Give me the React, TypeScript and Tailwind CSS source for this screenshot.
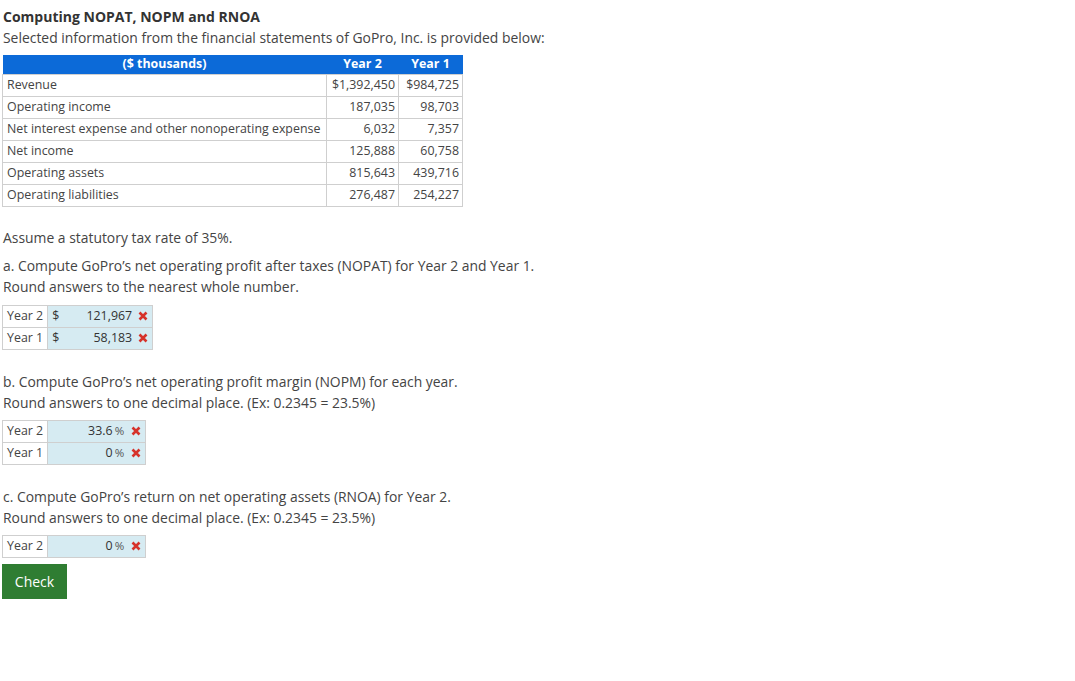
import React from "react";

const X = () => (
  <svg width="10" height="10" viewBox="0 0 10 10" className="inline-block">
    <path d="M1.5 1.5 L8.5 8.5 M8.5 1.5 L1.5 8.5" stroke="#d6322a" strokeWidth="2.6" strokeLinecap="butt" />
  </svg>
);

const rows = [
  ["Revenue", "$1,392,450", "$984,725"],
  ["Operating income", "187,035", "98,703"],
  ["Net interest expense and other nonoperating expense", "6,032", "7,357"],
  ["Net income", "125,888", "60,758"],
  ["Operating assets", "815,643", "439,716"],
  ["Operating liabilities", "276,487", "254,227"],
];

function DollarRow({ label, value }: { label: string; value: string }) {
  return (
    <tr className="h-[22px]">
      <td className="border border-[#cfcfcf] bg-white px-[4px] w-[45px] text-[12.4px] text-[#444] leading-none whitespace-nowrap">{label}</td>
      <td className="border border-[#cfcfcf] bg-[#d6ebf2] w-[105px] text-[12.4px] text-[#333] leading-none">
        <div className="flex items-center pl-[4px] pr-[4px]">
          <span>$</span>
          <span className="flex-1 text-right pr-[6px]">{value}</span>
          <X />
        </div>
      </td>
    </tr>
  );
}

function PctRow({ label, value }: { label: string; value: string }) {
  return (
    <tr className="h-[22px]">
      <td className="border border-[#cfcfcf] bg-white px-[4px] w-[45px] text-[12.4px] text-[#444] leading-none whitespace-nowrap">{label}</td>
      <td className="border border-[#cfcfcf] bg-[#d6ebf2] w-[98px] text-[12.4px] text-[#333] leading-none">
        <div className="flex items-center justify-end pr-[4px]">
          <span>{value}</span>
          <span className="ml-[2px] text-[11.5px] text-[#555]">%</span>
          <span className="ml-[7px] flex items-center"><X /></span>
        </div>
      </td>
    </tr>
  );
}

export default function App() {
  return (
    <div className="min-h-[681px] w-[1075px] bg-white text-[#444] pl-[2px] pt-[6px]" style={{ fontFamily: '"Open Sans", "Noto Sans", sans-serif' }}>
      <div className="text-[14px] leading-[21px] font-bold text-[#333] pl-[1px]">Computing NOPAT, NOPM and RNOA</div>
      <div className="text-[13.9px] leading-[21px] text-[#444] pl-[1px]">Selected information from the financial statements of GoPro, Inc. is provided below:</div>

      <table className="mt-[7px] border-collapse text-[12.4px]">
        <thead>
          <tr className="h-[19px] bg-[#0c6ad8] text-white font-bold">
            <th className="w-[324px] text-center leading-none">($ thousands)</th>
            <th className="w-[72px] text-center leading-none">Year 2</th>
            <th className="w-[64px] text-center leading-none">Year 1</th>
          </tr>
        </thead>
        <tbody>
          {rows.map((r) => (
            <tr key={r[0]} className="h-[22px]">
              <td className="border border-[#cfcfcf] px-[4px] leading-none text-[#444] whitespace-nowrap">{r[0]}</td>
              <td className="border border-[#cfcfcf] px-[3px] text-right leading-none text-[#444]">{r[1]}</td>
              <td className="border border-[#cfcfcf] px-[3px] text-right leading-none text-[#444]">{r[2]}</td>
            </tr>
          ))}
        </tbody>
      </table>

      <div className="mt-[20px] text-[13.9px] leading-[21px] pl-[1px]">Assume a statutory tax rate of 35%.</div>
      <div className="mt-[7px] text-[13.9px] leading-[21px] pl-[1px]">a. Compute GoPro’s net operating profit after taxes (NOPAT) for Year 2 and Year 1.</div>
      <div className="text-[13.9px] leading-[21px] pl-[1px]">Round answers to the nearest whole number.</div>
      <table className="mt-[8px] border-collapse">
        <tbody>
          <DollarRow label="Year 2" value="121,967" />
          <DollarRow label="Year 1" value="58,183" />
        </tbody>
      </table>

      <div className="mt-[21px] text-[13.9px] leading-[21px] pl-[1px]">b. Compute GoPro’s net operating profit margin (NOPM) for each year.</div>
      <div className="text-[13.9px] leading-[21px] pl-[1px]">Round answers to one decimal place. (Ex: 0.2345 = 23.5%)</div>
      <table className="mt-[7px] border-collapse">
        <tbody>
          <PctRow label="Year 2" value="33.6" />
          <PctRow label="Year 1" value="0" />
        </tbody>
      </table>

      <div className="mt-[21px] text-[13.9px] leading-[21px] pl-[1px]">c. Compute GoPro’s return on net operating assets (RNOA) for Year 2.</div>
      <div className="text-[13.9px] leading-[21px] pl-[1px]">Round answers to one decimal place. (Ex: 0.2345 = 23.5%)</div>
      <table className="mt-[7px] border-collapse">
        <tbody>
          <PctRow label="Year 2" value="0" />
        </tbody>
      </table>

      <button className="mt-[6px] h-[35px] w-[65px] bg-[#2f7d32] text-white text-[14px]">Check</button>
    </div>
  );
}
